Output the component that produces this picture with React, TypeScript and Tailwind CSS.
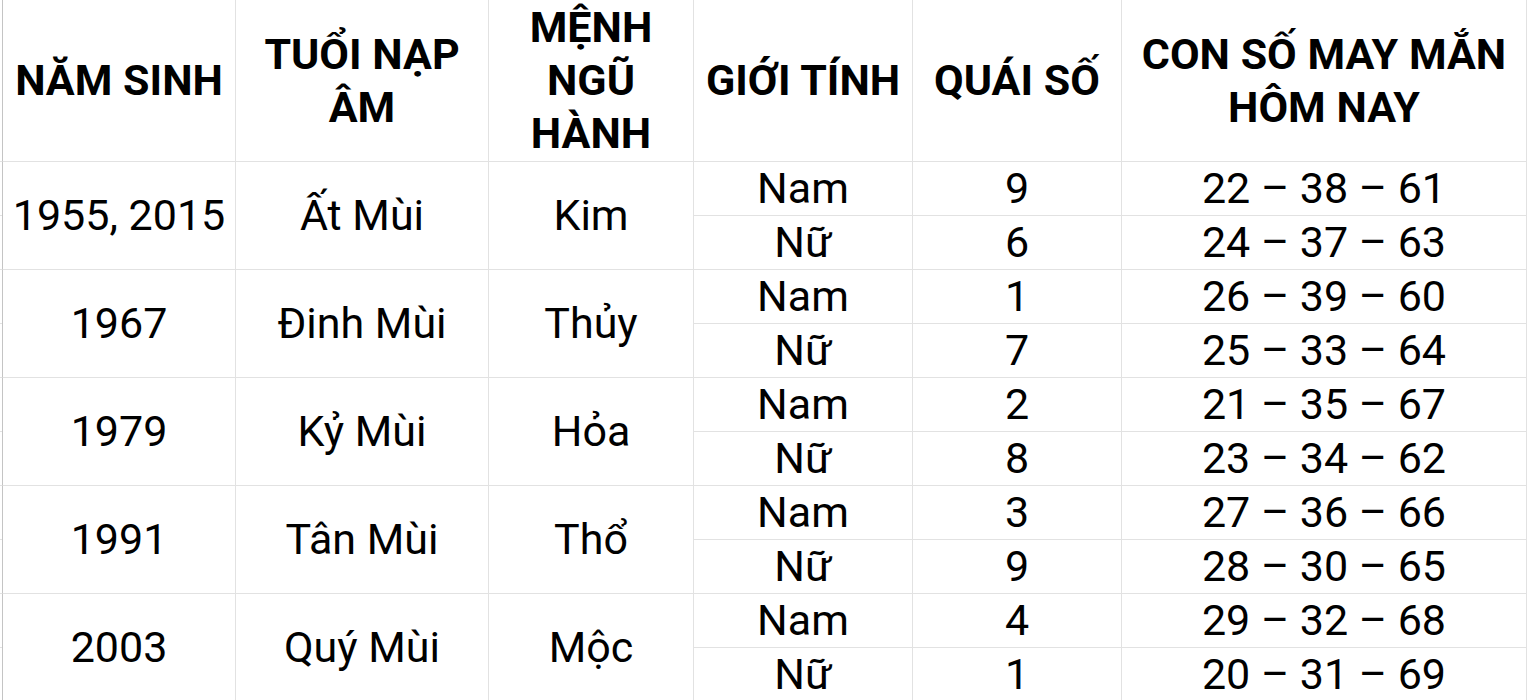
import React from "react";

const groups = [
  {
    year: "1955, 2015",
    tuoi: "Ất Mùi",
    menh: "Kim",
    rows: [
      { gender: "Nam", quai: "9", lucky: "22 – 38 – 61" },
      { gender: "Nữ", quai: "6", lucky: "24 – 37 – 63" },
    ],
  },
  {
    year: "1967",
    tuoi: "Đinh Mùi",
    menh: "Thủy",
    rows: [
      { gender: "Nam", quai: "1", lucky: "26 – 39 – 60" },
      { gender: "Nữ", quai: "7", lucky: "25 – 33 – 64" },
    ],
  },
  {
    year: "1979",
    tuoi: "Kỷ Mùi",
    menh: "Hỏa",
    rows: [
      { gender: "Nam", quai: "2", lucky: "21 – 35 – 67" },
      { gender: "Nữ", quai: "8", lucky: "23 – 34 – 62" },
    ],
  },
  {
    year: "1991",
    tuoi: "Tân Mùi",
    menh: "Thổ",
    rows: [
      { gender: "Nam", quai: "3", lucky: "27 – 36 – 66" },
      { gender: "Nữ", quai: "9", lucky: "28 – 30 – 65" },
    ],
  },
  {
    year: "2003",
    tuoi: "Quý Mùi",
    menh: "Mộc",
    rows: [
      { gender: "Nam", quai: "4", lucky: "29 – 32 – 68" },
      { gender: "Nữ", quai: "1", lucky: "20 – 31 – 69" },
    ],
  },
];

const cell =
  "flex shrink-0 items-center justify-center text-center border-r border-b border-[#e2e2e2]";

export default function App() {
  return (
    <div className="w-[1527px] h-[700px] overflow-hidden bg-white text-black font-['Roboto','Noto_Sans',sans-serif]">
      {/* header */}
      <div className="flex h-[162px] font-bold text-[43px] leading-[53px]">
        <div className="w-[2px] shrink-0 border-b border-[#e2e2e2]" />
        <div className={`${cell} w-[234px] border-l border-l-[#c4c4c4]`}>NĂM SINH</div>
        <div className={`${cell} w-[253px]`}>
          <span>
            TUỔI NẠP
            <br />
            ÂM
          </span>
        </div>
        <div className={`${cell} w-[205px]`}>
          <span>
            MỆNH
            <br />
            NGŨ
            <br />
            HÀNH
          </span>
        </div>
        <div className={`${cell} w-[219px]`}>GIỚI TÍNH</div>
        <div className={`${cell} w-[209px]`}>QUÁI SỐ</div>
        <div className={`${cell} w-[405px]`}>
          <span>
            CON SỐ MAY MẮN
            <br />
            HÔM NAY
          </span>
        </div>
      </div>

      {/* body */}
      {groups.map((g) => (
        <div key={g.year} className="flex h-[108px] text-[43px]">
          <div className="flex w-[2px] shrink-0 flex-col">
            <div className="h-[54px] border-b border-[#e2e2e2]" />
            <div className="h-[54px] border-b border-[#e2e2e2]" />
          </div>
          <div className={`${cell} w-[234px] border-l border-l-[#c4c4c4]`}>{g.year}</div>
          <div className={`${cell} w-[253px]`}>{g.tuoi}</div>
          <div className={`${cell} w-[205px]`}>{g.menh}</div>
          <div className="flex flex-col">
            {g.rows.map((row, ri) => (
              <div key={ri} className="flex h-[54px]">
                <div className={`${cell} w-[219px]`}>{row.gender}</div>
                <div className={`${cell} w-[209px]`}>{row.quai}</div>
                <div className={`${cell} w-[405px]`}>{row.lucky}</div>
              </div>
            ))}
          </div>
        </div>
      ))}
    </div>
  );
}
